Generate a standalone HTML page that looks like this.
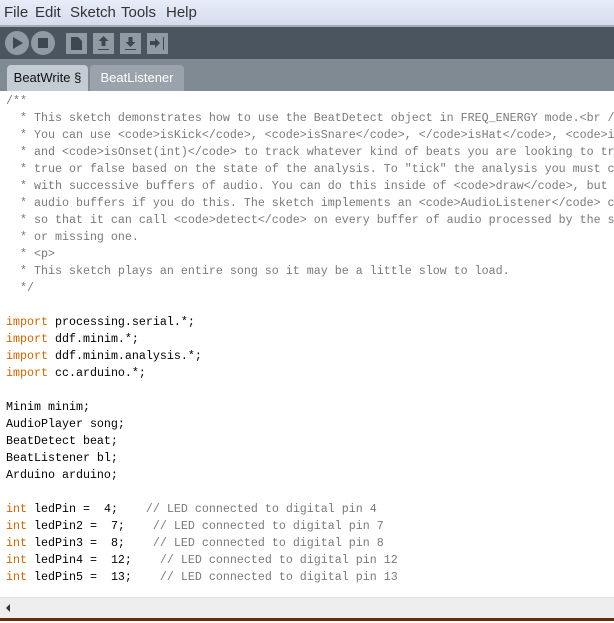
<!DOCTYPE html>
<html><head><style>
*{margin:0;padding:0}
body{width:614px;height:621px;overflow:hidden;background:#fff;position:relative;font-family:"Liberation Sans",sans-serif}
#menu{position:absolute;left:0;top:0;width:614px;height:25px;background:linear-gradient(#e8ecf8,#d6ddef);border-bottom:2px solid #a8acb4;font-size:15px;color:#333}
#menu span{position:absolute;top:4px}
#tool{position:absolute;left:0;top:27px;width:614px;height:32px;background:#4b555f}
#tabs{position:absolute;left:0;top:59px;width:614px;height:32px;background:#808a93}
.tab{position:absolute;top:6px;height:26px;border-radius:4px 4px 0 0;font-size:13px;line-height:26px;text-align:center}
pre{position:absolute;left:6px;top:93px;font-family:"Liberation Mono",monospace;font-size:11.67px;line-height:17px;color:#000}
.c{color:#7a7a7a}.k{color:#cc6600}
#sb{position:absolute;left:0;top:597px;width:614px;height:21px;background:#eee;border-top:1px solid #ddd}
#bot{position:absolute;left:0;top:618px;width:614px;height:3px;background:#6a2a10}
</style></head><body>
<div id="menu"><span style="left:4px">File</span><span style="left:35px">Edit</span><span style="left:70px">Sketch</span><span style="left:121px">Tools</span><span style="left:166px">Help</span></div>
<div id="tool"><svg width="180" height="32">
<circle cx="17" cy="16" r="12" fill="#909aa3"/><path d="M13 10 L23 16 L13 22Z" fill="#3d4750"/>
<circle cx="43" cy="16" r="12" fill="#909aa3"/><rect x="38" y="11" width="10" height="10" fill="#3d4750"/>
<rect x="66" y="6" width="21" height="21" fill="#909aa3"/><path d="M71 10h7l4 4v9h-11z" fill="#3d4750"/>
<rect x="93" y="6" width="21" height="21" fill="#909aa3"/><path d="M103.5 9l-5 5h3v5h4v-5h3z" fill="#3d4750"/><rect x="98" y="22" width="11" height="1" fill="#3d4750"/>
<rect x="120" y="6" width="21" height="21" fill="#909aa3"/><path d="M130.5 20l-5-5h3v-5h4v5h3z" fill="#3d4750"/><rect x="125" y="22" width="11" height="1" fill="#3d4750"/>
<rect x="147" y="6" width="21" height="21" fill="#909aa3"/><path d="M150 14h5v-3l5 5-5 5v-3h-5z" fill="#3d4750"/><rect x="163" y="10" width="1" height="13" fill="#3d4750"/>
</svg></div>
<div id="tabs"><div class="tab" style="left:7px;width:81px;background:#c3cbd3;color:#111">BeatWrite §</div><div class="tab" style="left:90px;width:94px;background:#9aa3ab;color:#fff">BeatListener</div></div>
<pre><span class="c">/**
  * This sketch demonstrates how to use the BeatDetect object in FREQ_ENERGY mode.&lt;br /
  * You can use &lt;code&gt;isKick&lt;/code&gt;, &lt;code&gt;isSnare&lt;/code&gt;, &lt;/code&gt;isHat&lt;/code&gt;, &lt;code&gt;i
  * and &lt;code&gt;isOnset(int)&lt;/code&gt; to track whatever kind of beats you are looking to tr
  * true or false based on the state of the analysis. To "tick" the analysis you must c
  * with successive buffers of audio. You can do this inside of &lt;code&gt;draw&lt;/code&gt;, but
  * audio buffers if you do this. The sketch implements an &lt;code&gt;AudioListener&lt;/code&gt; c
  * so that it can call &lt;code&gt;detect&lt;/code&gt; on every buffer of audio processed by the s
  * or missing one.
  * &lt;p&gt;
  * This sketch plays an entire song so it may be a little slow to load.
  */</span>

<span class="k">import</span> processing.serial.*;
<span class="k">import</span> ddf.minim.*;
<span class="k">import</span> ddf.minim.analysis.*;
<span class="k">import</span> cc.arduino.*;

Minim minim;
AudioPlayer song;
BeatDetect beat;
BeatListener bl;
Arduino arduino;

<span class="k">int</span> ledPin =  4;    <span class="c">// LED connected to digital pin 4</span>
<span class="k">int</span> ledPin2 =  7;    <span class="c">// LED connected to digital pin 7</span>
<span class="k">int</span> ledPin3 =  8;    <span class="c">// LED connected to digital pin 8</span>
<span class="k">int</span> ledPin4 =  12;    <span class="c">// LED connected to digital pin 12</span>
<span class="k">int</span> ledPin5 =  13;    <span class="c">// LED connected to digital pin 13</span></pre>
<div id="sb"><svg width="20" height="20"><path d="M10 6 L6 10 L10 14Z" fill="#333"/></svg></div>
<div id="bot"></div>
</body></html>
